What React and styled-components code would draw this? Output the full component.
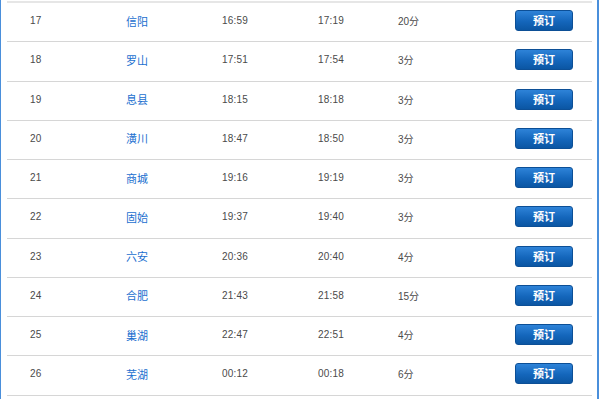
import React from "react";
import styled, { createGlobalStyle } from "styled-components";

const GlobalStyle = createGlobalStyle`
  html, body {
    margin: 0;
    padding: 0;
    background: #fff;
  }
  body {
    font-family: "Liberation Sans", Arial, "Noto Sans CJK SC", sans-serif;
  }
`;

const Frame = styled.div`
  box-sizing: border-box;
  width: 600px;
  height: 399px;
  overflow: hidden;
  border-left: 1px solid #4a8fdb;
  border-right: 1px solid #fff;
  display: flex;
`;

const Inner = styled.div`
  flex: 1;
  min-width: 0;
  padding: 1px 5px 0 6px;
  border-right: 2px solid #4a8fdb;
`;

const Table = styled.div`
  border-top: 2px solid #e6e6e6;
`;

const Row = styled.div`
  display: grid;
  grid-template-columns: 96px 96px 96px 80px 117px 58px;
  align-items: center;
  box-sizing: content-box;
  height: 35.25px;
  padding: 0 19px 3px 23px;
  border-bottom: 1px solid #d6d6d6;
  color: #4a4a4a;
`;

const Num = styled.span`
  font-size: 10px;
  letter-spacing: 0.2px;
`;

const Station = styled.span`
  font-size: 11px;
  color: #1b6fcf;
  font-family: "Noto Sans CJK SC", sans-serif;
`;

const Stop = styled.span`
  font-size: 10px;
  font-family: "Liberation Sans", "Noto Sans CJK SC", sans-serif;
`;

const Book = styled.button`
  box-sizing: border-box;
  width: 58px;
  height: 21px;
  margin: 0;
  padding: 0;
  border: 1px solid #0c4f96;
  border-radius: 3px;
  background: linear-gradient(#2e83d8, #1466bb 55%, #0b56a3);
  color: #fff;
  font-size: 11px;
  font-weight: bold;
  font-family: "Noto Sans CJK SC", sans-serif;
  line-height: 19px;
  cursor: pointer;
`;

const stops = [
  ["17", "信阳", "16:59", "17:19", "20分"],
  ["18", "罗山", "17:51", "17:54", "3分"],
  ["19", "息县", "18:15", "18:18", "3分"],
  ["20", "潢川", "18:47", "18:50", "3分"],
  ["21", "商城", "19:16", "19:19", "3分"],
  ["22", "固始", "19:37", "19:40", "3分"],
  ["23", "六安", "20:36", "20:40", "4分"],
  ["24", "合肥", "21:43", "21:58", "15分"],
  ["25", "巢湖", "22:47", "22:51", "4分"],
  ["26", "芜湖", "00:12", "00:18", "6分"],
];

export default function App() {
  return (
    <>
      <GlobalStyle />
      <Frame>
        <Inner>
          <Table>
            {stops.map(([no, name, arrive, depart, wait]) => (
              <Row key={no}>
                <Num>{no}</Num>
                <Station>{name}</Station>
                <Num>{arrive}</Num>
                <Num>{depart}</Num>
                <Stop>{wait}</Stop>
                <Book>预订</Book>
              </Row>
            ))}
          </Table>
        </Inner>
      </Frame>
    </>
  );
}
